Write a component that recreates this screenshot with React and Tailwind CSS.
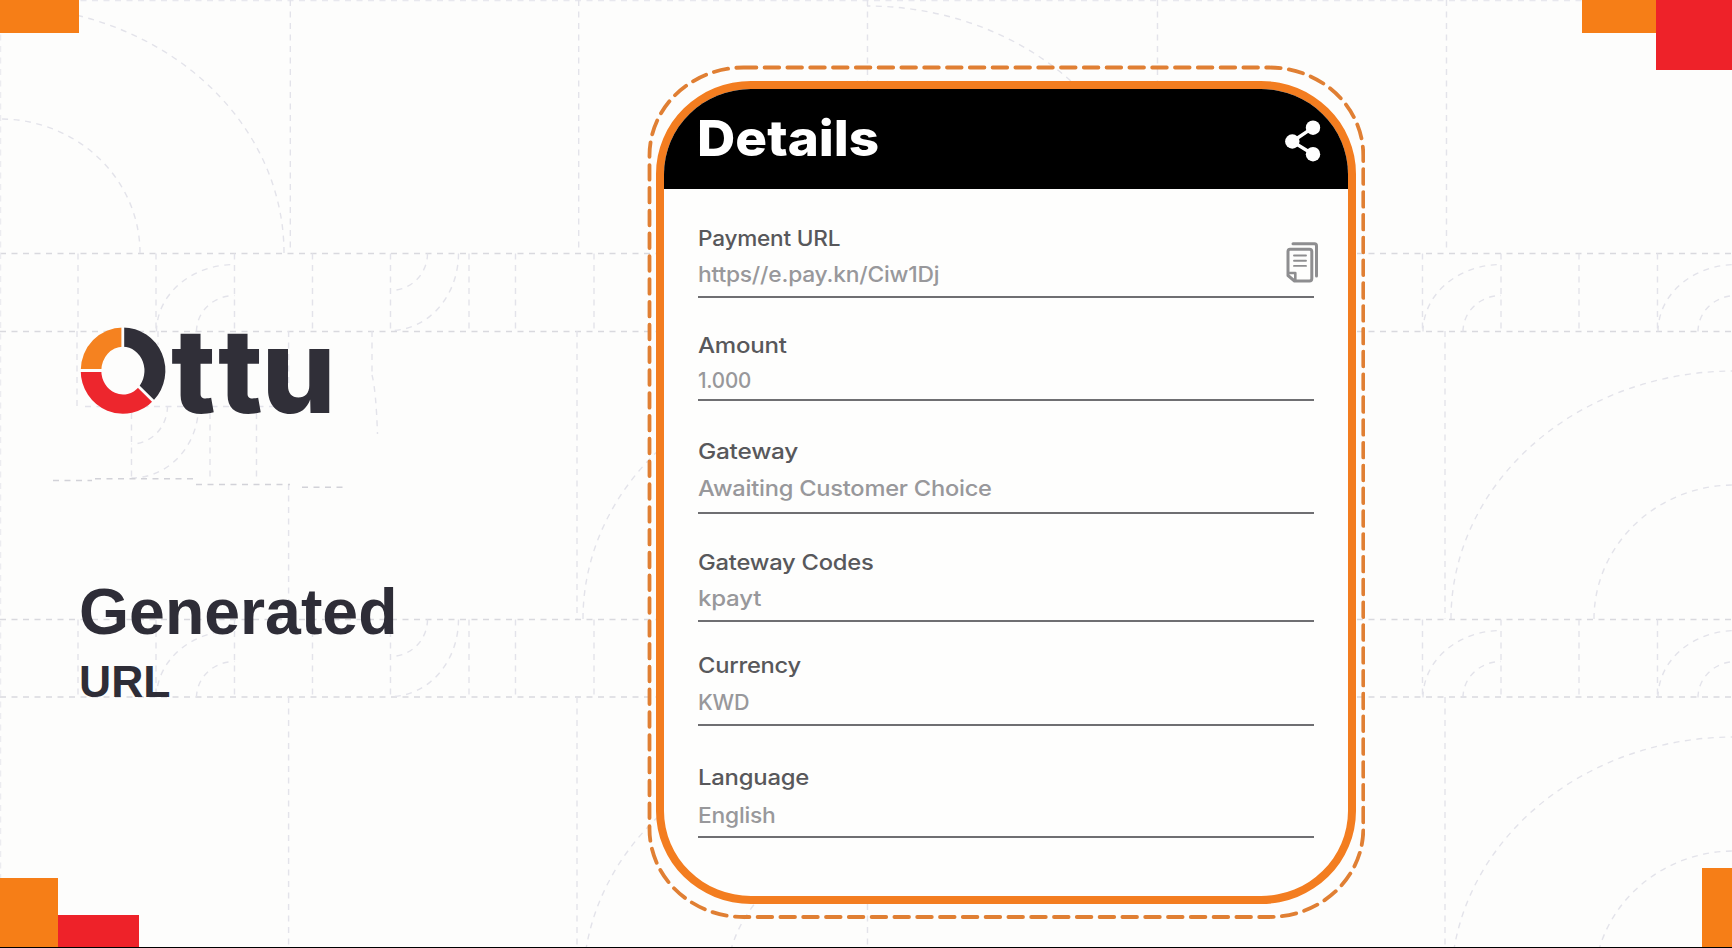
const ROWS = [
  { label: "Payment URL", value: "https//e.pay.kn/Ciw1Dj", ls: "scale-x-[1.06]", vs: "scale-x-[1.07]", box: "mt-[37px]", gap: "mt-[12px] pb-[10px]", copy: true },
  { label: "Amount", value: "1.000", ls: "scale-x-[1.13]", vs: "scale-x-[0.965]", box: "mt-[35px]", gap: "mt-[11px] pb-[7px]" },
  { label: "Gateway", value: "Awaiting Customer Choice", ls: "scale-x-[1.145]", vs: "scale-x-[1.109]", box: "mt-[38px]", gap: "mt-[13px] pb-[12px]" },
  { label: "Gateway Codes", value: "kpayt", ls: "scale-x-[1.114]", vs: "scale-x-[1.13]", box: "mt-[36px]", gap: "mt-[12px] pb-[10px]" },
  { label: "Currency", value: "KWD", ls: "scale-x-[1.112]", vs: "scale-x-[1.01]", box: "mt-[31px]", gap: "mt-[13px] pb-[10px]" },
  { label: "Language", value: "English", ls: "scale-x-[1.12]", vs: "scale-x-[1.07]", box: "mt-[39px]", gap: "mt-[14px] pb-[9px]" },
];

function quarter(cx, cy, rx, ry, sx, sy) {
  return `M${cx + sx * rx} ${cy}A${rx} ${ry} 0 0 ${sx * sy > 0 ? 1 : 0} ${cx} ${cy + sy * ry}`;
}

function Backdrop() {
  const bands = [253.5, 619.5];
  const cols = [78, 156, 234.5, 312.5, 390.5, 469, 515.5, 594, 1422.5, 1501, 1579, 1657.5];
  return (
    <svg className="absolute inset-0 h-full w-full" viewBox="0 0 1732 948" fill="none" stroke="#e3e3ea" strokeWidth="1.4" strokeDasharray="6 5.5">
      <path d="M0 .5H1732" stroke="#e8e8ee" />
      <path d="M0 253.5H1732M0 331.5H1732M0 619.5H1732M0 697H1732" stroke="#d9d9de" />
      <path d="M.5 0V948" stroke="#ececf0" />
      <path d="M290.3 0V253M578.7 0V253M867.5 0V253M1157.5 0V253M1446.5 0V253" />
      <path d="M288.6 484V619M288.6 331V385M577 331V619M1445 331V619M288.6 697V948M577 697V948M867.5 697V948M1445 697V948" />
      {bands.map((y) => (
        <g key={y}>
          {cols.map((x) => <path key={x} d={`M${x} ${y}V${y + 78}`} />)}
          <path d={quarter(234.5, y + 78, 78, 67, -1, -1)} />
          <path d={quarter(234.5, y + 78, 38, 36, -1, -1)} />
          <path d={quarter(390.5, y, 37, 37, 1, 1)} />
          <path d={quarter(390.5, y, 68, 77, 1, 1)} />
          <path d={quarter(1501, y + 78, 78, 67, -1, -1)} />
          <path d={quarter(1501, y + 78, 38, 36, -1, -1)} />
          <path d={quarter(1736, y + 78, 78, 67, -1, -1)} />
          <path d={quarter(1736, y + 78, 38, 36, -1, -1)} />
        </g>
      ))}
      <path d={quarter(0, 253, 284, 247, 1, -1)} />
      <path d={quarter(0, 253, 140, 134, 1, -1)} />
      <path d={quarter(867, 253, 284, 247, 1, -1)} />
      {[619, 985].map((y) => (
        <g key={y}>
          <path d={quarter(866, y, 283, 248, -1, -1)} />
          <path d={quarter(866, y, 140, 134, -1, -1)} />
          <path d={quarter(1734, y, 283, 248, -1, -1)} />
          <path d={quarter(1734, y, 140, 134, -1, -1)} />
        </g>
      ))}
      <path d="M77 331V411M85 406.5H290M131.5 413V478M210 413V477M256.5 413V477M372 331V375M158 331V345" />
      <path d="M372 375Q376 390 377.5 434" />
      <path d={quarter(131.5, 406, 36, 38, 1, 1)} />
      <path d={quarter(131.5, 406, 67, 72, 1, 1)} />
      <path d="M53 480.5H92M95 478.7H196M196 484.5H290M302 487.3H344" stroke="#d2d2d8" />
    </svg>
  );
}

function Corners() {
  return (
    <>
      <div className="absolute left-0 top-0 h-[33px] w-[79px] bg-[#f67e17]" />
      <div className="absolute right-[76px] top-0 h-[33px] w-[74px] bg-[#f67e17]" />
      <div className="absolute right-0 top-0 h-[70px] w-[76px] bg-[#ee2229]" />
      <div className="absolute bottom-0 left-0 h-[70px] w-[58px] bg-[#f67e17]" />
      <div className="absolute bottom-0 left-[58px] h-[33px] w-[81px] bg-[#ee2229]" />
      <div className="absolute bottom-0 right-0 h-[80px] w-[30px] bg-[#f67e17]" />
      <div className="absolute bottom-0 left-0 h-px w-full bg-black" />
    </>
  );
}

function Logo() {
  return (
    <svg className="block h-[90px] w-[254px] overflow-visible" viewBox="80 326 254 90">
      <path d="M80.7 370.6A42.3 43.1 0 0 1 123 327.5V346.8A21.7 23.9 0 0 0 101.3 370.6Z" fill="#f58220" />
      <path d="M123 327.5A42.3 43.1 0 0 1 153.7 400.3L138 387.7A21.7 23.9 0 0 0 123 346.8Z" fill="#302f38" />
      <path d="M153.7 400.3A42.3 43.1 0 0 1 80.7 370.6H101.3A21.7 23.9 0 0 0 138.8 387Z" fill="#ed262d" />
      <path d="M122.8 326V348M79 370.5H102.5M137.5 385.5L156 403.8" stroke="#fdfdfc" strokeWidth="2.8" />
      <text y="413" x="171 218 261.5" fill="#302f38" className="font-['Inter'] text-[117px] font-extrabold">ttu</text>
    </svg>
  );
}

function ShareIcon() {
  return (
    <svg className="block h-[42px] w-[36px]" viewBox="1285 120 36 42" fill="#fff" stroke="#fff" strokeWidth="3.4">
      <path d="M1313 127.7L1292.3 141.5L1313 154.2" fill="none" />
      <g stroke="none">
        <circle cx="1292.3" cy="141.5" r="7.2" />
        <circle cx="1313" cy="127.7" r="7.2" />
        <circle cx="1313" cy="154.2" r="7.2" />
      </g>
    </svg>
  );
}

function CopyIcon() {
  return (
    <svg className="absolute right-[-5px] top-[15px] block h-[42px] w-[34px]" viewBox="1285 241 34 42" fill="none" stroke="#8e8e90" strokeWidth="3" strokeLinecap="round" strokeLinejoin="round">
      <path d="M1293 243.8H1314.5Q1316.5 243.8 1316.5 246V276" />
      <path d="M1290 249.3H1309.5Q1311.8 249.3 1311.8 251.6V278.5Q1311.8 281 1309.5 281H1294.5L1288 275.5V251.6Q1288 249.3 1290 249.3Z" />
      <path d="M1289 273H1295.3V280" strokeWidth="2.6" />
      <path d="M1294 255.5H1306M1294 260.7H1306M1294 265.9H1306" strokeWidth="1.9" />
    </svg>
  );
}

function Field({ row }) {
  return (
    <div className={`relative border-b-2 border-[#6f6f72] ${row.box}`}>
      <div className="h-6 whitespace-nowrap text-[21.3px] font-medium leading-6 tracking-[-0.2px] text-[#58585b]">
        <span className={`inline-block origin-left ${row.ls}`}>{row.label}</span>
      </div>
      <div className={row.gap}>
        <div className="h-6 whitespace-nowrap text-[21.3px] font-medium leading-6 tracking-[-0.2px] text-[#98989b]">
          <span className={`inline-block origin-left ${row.vs}`}>{row.value}</span>
        </div>
      </div>
      {row.copy && <CopyIcon />}
    </div>
  );
}

export default function App() {
  return (
    <main className="relative flex h-[948px] w-[1732px] overflow-hidden bg-[#fdfdfc] font-['Inter',sans-serif]">
      <Backdrop />
      <Corners />
      <section className="relative w-[647px] pl-[80px] pt-[326px] font-['Liberation_Sans',sans-serif] font-bold text-[#2e2d37]">
        <Logo />
        <h1 className="-ml-px mt-[160px] text-[64.4px] leading-[72px]">Generated</h1>
        <p className="-ml-px mt-[10px] text-[44.5px] leading-[48px]">URL</p>
      </section>
      <section className="relative mt-[65px] h-[854px] w-[718px] p-[9px] pt-[16px]">
        <svg className="absolute inset-0 h-full w-full" viewBox="0 0 718 854" fill="none">
          <rect x="2.5" y="2.5" width="713.8" height="849.5" rx="94" ry="88" stroke="#e07f33" strokeWidth="3.8" strokeDasharray="14.6 8.2" strokeDashoffset="1.7" strokeLinecap="round" />
        </svg>
        <div className="relative flex h-[823px] w-[700px] flex-col overflow-hidden rounded-[95px/93px] border-8 border-[#f37d20] bg-[#fefefd]">
          <header className="flex h-[100px] shrink-0 items-start justify-between bg-black pl-[33px] pr-[27px] pt-[20px]">
            <h2 className="mt-px text-[50px] font-extrabold leading-[56px] text-white"><span className="inline-block origin-left scale-x-[1.06]">Details</span></h2>
            <div className="mt-[11px]"><ShareIcon /></div>
          </header>
          <div className="flex w-[650px] flex-col pl-[34px]">
            {ROWS.map((r) => <Field key={r.label} row={r} />)}
          </div>
        </div>
      </section>
    </main>
  );
}
